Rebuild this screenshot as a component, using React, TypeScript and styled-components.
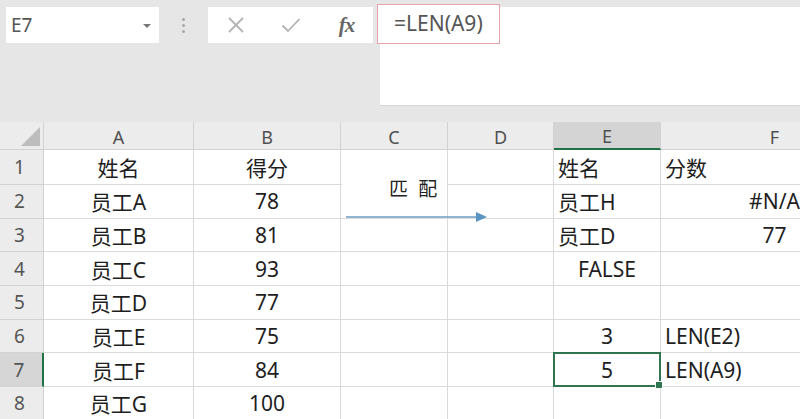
import React from 'react'
import styled, {createGlobalStyle} from 'styled-components'

const GlobalStyle = createGlobalStyle`
    html, body {
        margin: 0;
        padding: 0;
        background: #e6e6e6;
        overflow: hidden;
    }
    * {
        box-sizing: border-box;
    }
`

const Page = styled.div`
    width: 800px;
    height: 419px;
    overflow: hidden;
    background: #e6e6e6;
    font-family: 'Noto Sans', 'Noto Sans CJK SC', sans-serif;
`

const Toolbar = styled.div`
    display: flex;
    align-items: flex-start;
    height: 122px;
    padding: 7px 0 0 6px;
`

const NameBox = styled.div`
    width: 153px;
    height: 36px;
    background: #ffffff;
    display: flex;
    align-items: center;
    justify-content: space-between;
    padding: 0 8px 0 5px;
    font-size: 19px;
    color: #555555;
`

const DropArrow = styled.span`
    width: 0;
    height: 0;
    border-left: 4px solid transparent;
    border-right: 4px solid transparent;
    border-top: 4px solid #777777;
    margin-top: 2px;
`

const Dots = styled.div`
    width: 49px;
    height: 36px;
    display: flex;
    flex-direction: column;
    align-items: center;
    justify-content: center;
    gap: 3px;
    span {
        width: 3px;
        height: 3px;
        border-radius: 50%;
        background: #a8a8a8;
    }
`

const ButtonGroup = styled.div`
    width: 165px;
    height: 36px;
    background: #ffffff;
    display: grid;
    grid-template-columns: repeat(3, 55px);
    align-items: center;
    justify-items: center;
`

const Fx = styled.span`
    font-family: 'Liberation Serif', serif;
    font-style: italic;
    font-weight: bold;
    font-size: 21px;
    color: #666666;
    letter-spacing: -1px;
    margin-left: 2px;
`

const FormulaBar = styled.div`
    position: relative;
    flex: 1;
    height: 99px;
    margin-left: 7px;
    background: #ffffff;
    border-bottom: 1px solid #d6d6d6;
`

const FormulaText = styled.div`
    position: absolute;
    left: -3px;
    top: -3px;
    width: 123px;
    height: 40px;
    border: 1.5px solid #e8a1ab;
    padding-left: 16px;
    font-size: 21px;
    line-height: 36px;
    color: #555555;
    background: #ffffff;
    white-space: nowrap;
`

const SheetWrap = styled.div`
    position: relative;
    height: 297px;
    overflow: hidden;
`

const Sheet = styled.div`
    display: grid;
    grid-template-columns: 44px 150px 147px 107px 106px 107px 228px;
    grid-template-rows: 28px 35px repeat(7, 33.7px);
    width: 889px;
`

const ColHead = styled.div<{$active?: boolean}>`
    display: flex;
    align-items: center;
    justify-content: center;
    font-size: 18px;
    color: #505050;
    background: ${(p) => (p.$active ? '#d4d4d4' : '#ececec')};
    border-right: 1px solid #d2d2d2;
    border-bottom: ${(p) => (p.$active ? '2px solid #217346' : '1px solid #d2d2d2')};
    padding-top: 2px;
`

const Corner = styled.div`
    display: flex;
    align-items: flex-end;
    justify-content: flex-end;
    padding: 0 3px 3px 0;
    background: #ececec;
    border-right: 1px solid #d2d2d2;
    border-bottom: 1px solid #d2d2d2;
`

const RowHead = styled.div<{$active?: boolean}>`
    display: flex;
    align-items: center;
    justify-content: center;
    padding-right: 4px;
    font-size: 19px;
    color: #555555;
    background: ${(p) => (p.$active ? '#d6d6d6' : '#ececec')};
    border-bottom: 1px solid #d2d2d2;
    border-right: ${(p) => (p.$active ? '2px solid #217346' : '1px solid #d2d2d2')};
`

const Cell = styled.div<{$align: 'left' | 'center'; $selected?: boolean}>`
    position: relative;
    display: flex;
    align-items: center;
    justify-content: ${(p) => (p.$align === 'left' ? 'flex-start' : 'center')};
    padding: 0 4px;
    font-size: 21px;
    color: #1e1e1e;
    background: #ffffff;
    border-right: 1px solid #dadada;
    border-bottom: 1px solid #dadada;
    white-space: nowrap;
    ${(p) =>
        p.$selected &&
        `
        &::after {
            content: '';
            position: absolute;
            left: -1px;
            top: -1px;
            right: -1px;
            bottom: -1px;
            border: 2px solid #2e7550;
            pointer-events: none;
        }
        &::before {
            content: '';
            position: absolute;
            right: -3px;
            bottom: -3px;
            width: 6px;
            height: 6px;
            background: #2e7550;
            border: 1px solid #ffffff;
            z-index: 2;
        }
    `}
`

const MatchLabel = styled.div`
    position: absolute;
    left: 342px;
    top: 52px;
    width: 105px;
    height: 28px;
    padding-left: 47px;
    background: #ffffff;
    font-family: 'Noto Sans CJK SC', sans-serif;
    font-size: 19px;
    line-height: 28px;
    color: #222222;
    letter-spacing: 3px;
    white-space: nowrap;
`

const Arrow = styled.svg`
    position: absolute;
    left: 344px;
    top: 88px;
`

const columns = ['A', 'B', 'C', 'D', 'E', 'F']

type CellData = {text: string; align: 'left' | 'center'}

const c = (text: string, align: 'left' | 'center' = 'center'): CellData => ({text, align})

const rows: CellData[][] = [
    [c('姓名'), c('得分'), c(''), c(''), c('姓名', 'left'), c('分数', 'left')],
    [c('员工A'), c('78'), c(''), c(''), c('员工H', 'left'), c('#N/A')],
    [c('员工B'), c('81'), c(''), c(''), c('员工D', 'left'), c('77')],
    [c('员工C'), c('93'), c(''), c(''), c('FALSE'), c('')],
    [c('员工D'), c('77'), c(''), c(''), c(''), c('')],
    [c('员工E'), c('75'), c(''), c(''), c('3'), c('LEN(E2)', 'left')],
    [c('员工F'), c('84'), c(''), c(''), c('5'), c('LEN(A9)', 'left')],
    [c('员工G'), c('100'), c(''), c(''), c(''), c('')],
]

const App: React.FC = () => {
    return (
        <Page>
            <GlobalStyle />
            <Toolbar>
                <NameBox>
                    <span>E7</span>
                    <DropArrow />
                </NameBox>
                <Dots>
                    <span />
                    <span />
                    <span />
                </Dots>
                <ButtonGroup>
                    <svg width="18" height="18" viewBox="0 0 18 18">
                        <path d="M2 2 L16 16 M16 2 L2 16" stroke="#b4b4b4" strokeWidth="1.8" fill="none" />
                    </svg>
                    <svg width="20" height="16" viewBox="0 0 20 16">
                        <path d="M1.5 8.5 L7 14 L18.5 2" stroke="#b4b4b4" strokeWidth="1.8" fill="none" />
                    </svg>
                    <Fx>fx</Fx>
                </ButtonGroup>
                <FormulaBar>
                    <FormulaText>=LEN(A9)</FormulaText>
                </FormulaBar>
            </Toolbar>
            <SheetWrap>
                <Sheet>
                    <Corner>
                        <svg width="19" height="19" viewBox="0 0 19 19">
                            <polygon points="19,0 19,19 0,19" fill="#bdbdbd" />
                        </svg>
                    </Corner>
                    {columns.map((col) => (
                        <ColHead key={col} $active={col === 'E'}>
                            {col}
                        </ColHead>
                    ))}
                    {rows.map((row, i) => (
                        <React.Fragment key={i}>
                            <RowHead $active={i === 6}>{i + 1}</RowHead>
                            {row.map((cell, j) => (
                                <Cell key={j} $align={cell.align} $selected={i === 6 && j === 4}>
                                    {cell.text}
                                </Cell>
                            ))}
                        </React.Fragment>
                    ))}
                </Sheet>
                <MatchLabel>匹 配</MatchLabel>
                <Arrow width="146" height="14" viewBox="0 0 146 14">
                    <line x1="2" y1="7" x2="136" y2="7" stroke="#6a9cc4" strokeWidth="1.5" />
                    <polygon points="132,2 143,7 132,12" fill="#5a94c2" />
                </Arrow>
            </SheetWrap>
        </Page>
    )
}

export default App
